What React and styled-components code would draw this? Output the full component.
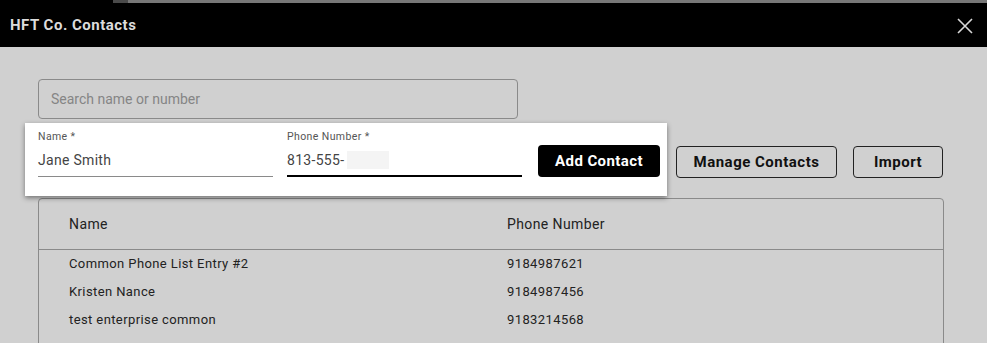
import React from 'react'
import styled, { createGlobalStyle } from 'styled-components'

const GlobalStyle = createGlobalStyle`
  html, body {
    margin: 0;
    padding: 0;
    background: #d0d0d0;
    font-family: Roboto, "Liberation Sans", Arial, sans-serif;
    overflow: hidden;
  }
`

const contacts = [
  { name: 'Common Phone List Entry #2', phone: '9184987621' },
  { name: 'Kristen Nance', phone: '9184987456' },
  { name: 'test enterprise common', phone: '9183214568' },
]

export default function App() {
  return (
    <>
      <GlobalStyle />
      <Page>
        <TopStrip>
          <StripDark />
          <StripLight />
        </TopStrip>
        <Header>
          <Title>HFT Co. Contacts</Title>
          <CloseButton aria-label="Close">
            <svg width="16" height="16" viewBox="0 0 16 16">
              <path d="M1 1 L15 15 M15 1 L1 15" stroke="#d8d8d8" strokeWidth="1.6" fill="none" />
            </svg>
          </CloseButton>
        </Header>

        <Content>
          <SearchInput placeholder="Search name or number" />

          <ActionRow>
            <AddCard>
              <Field>
                <FieldLabel>Name *</FieldLabel>
                <FieldValue>Jane Smith</FieldValue>
                <Underline />
              </Field>
              <Field>
                <FieldLabel>Phone Number *</FieldLabel>
                <FieldValue>
                  813-555-<Redacted />
                </FieldValue>
                <Underline $active />
              </Field>
              <AddButton>Add Contact</AddButton>
            </AddCard>
            <OutlineButton $width={161}>Manage Contacts</OutlineButton>
            <OutlineButton $width={90}>Import</OutlineButton>
          </ActionRow>

          <Table>
            <HeadRow>
              <Cell $head>Name</Cell>
              <Cell $head>Phone Number</Cell>
            </HeadRow>
            <Body>
              {contacts.map(c => (
                <Row key={c.phone}>
                  <Cell>{c.name}</Cell>
                  <Cell>{c.phone}</Cell>
                </Row>
              ))}
            </Body>
          </Table>
        </Content>
      </Page>
    </>
  )
}

const Page = styled.div`
  width: 987px;
  height: 343px;
  background: #d0d0d0;
  overflow: hidden;
`

const TopStrip = styled.div`
  display: flex;
  height: 3px;
  background: #000;
  padding-left: 113px;
`

const StripDark = styled.div`
  width: 15px;
  background: #4a4a4a;
`

const StripLight = styled.div`
  flex: 1;
  background: #777;
`

const Header = styled.div`
  height: 44px;
  background: #000;
  display: flex;
  align-items: center;
  justify-content: space-between;
  padding: 0 14px 0 10px;
`

const Title = styled.h1`
  margin: 0;
  font-size: 15px;
  font-weight: 700;
  color: #dcdcdc;
  letter-spacing: 0.5px;
`

const CloseButton = styled.button`
  background: none;
  border: none;
  padding: 0;
  display: flex;
  margin-top: 2px;
`

const Content = styled.div`
  padding: 32px 43px 0 38px;
`

const SearchInput = styled.input`
  box-sizing: border-box;
  display: block;
  width: 480px;
  height: 40px;
  border: 1px solid #8a8a8a;
  border-radius: 4px;
  background: transparent;
  padding: 0 12px;
  font-family: inherit;
  font-size: 14px;
  color: #333;
  &::placeholder {
    color: #858585;
  }
`

const ActionRow = styled.div`
  display: flex;
  align-items: center;
  gap: 16px;
  margin-top: 4px;
`

const AddCard = styled.div`
  box-sizing: border-box;
  flex-shrink: 0;
  width: 642px;
  height: 73px;
  margin-left: -13px;
  margin-right: -7px;
  background: #fff;
  box-shadow: 0 2px 5px rgba(0, 0, 0, 0.45);
  display: flex;
  align-items: flex-start;
  padding: 8px 7px 0 13px;
  gap: 14px;
`

const Field = styled.div`
  width: 235px;
  display: flex;
  flex-direction: column;
`

const FieldLabel = styled.span`
  font-size: 10.5px;
  color: #555;
  line-height: 12px;
  letter-spacing: 0.4px;
`

const FieldValue = styled.span`
  display: flex;
  align-items: center;
  font-size: 14px;
  color: #444;
  height: 20px;
  margin-top: 7px;
  letter-spacing: 0.3px;
`

const Redacted = styled.span`
  display: inline-block;
  width: 42px;
  height: 18px;
  margin-left: 3px;
  background: #f4f4f4;
`

const Underline = styled.div`
  margin-top: ${p => (p.$active ? '5px' : '6px')};
  height: ${p => (p.$active ? '2px' : '1px')};
  background: ${p => (p.$active ? '#000' : '#8a8a8a')};
`

const AddButton = styled.button`
  align-self: center;
  flex-shrink: 0;
  margin-left: 2px;
  margin-top: -5px;
  width: 122px;
  height: 32px;
  background: #000;
  color: #fff;
  border: none;
  border-radius: 4px;
  font-family: inherit;
  font-size: 15px;
  font-weight: 700;
  letter-spacing: 0.4px;
`

const OutlineButton = styled.button`
  box-sizing: border-box;
  flex-shrink: 0;
  width: ${p => p.$width}px;
  height: 32px;
  margin-top: 4px;
  background: transparent;
  border: 1px solid #222;
  border-radius: 4px;
  font-family: inherit;
  font-size: 15px;
  font-weight: 700;
  color: #111;
  letter-spacing: 0.5px;
`

const Table = styled.div`
  margin-top: 2px;
  width: 906px;
  height: 200px;
  box-sizing: border-box;
  border: 1px solid #8a8a8a;
  border-radius: 4px 4px 0 0;
`

const HeadRow = styled.div`
  display: grid;
  grid-template-columns: 438px 1fr;
  height: 50px;
  align-items: center;
  padding-left: 30px;
  border-bottom: 1px solid #8a8a8a;
`

const Body = styled.div`
  margin-top: -1px;
`

const Row = styled.div`
  display: grid;
  grid-template-columns: 438px 1fr;
  height: 28px;
  align-items: center;
  padding-left: 30px;
`

const Cell = styled.span`
  font-size: ${p => (p.$head ? '14px' : '13px')};
  color: #222;
  letter-spacing: 0.4px;
`
